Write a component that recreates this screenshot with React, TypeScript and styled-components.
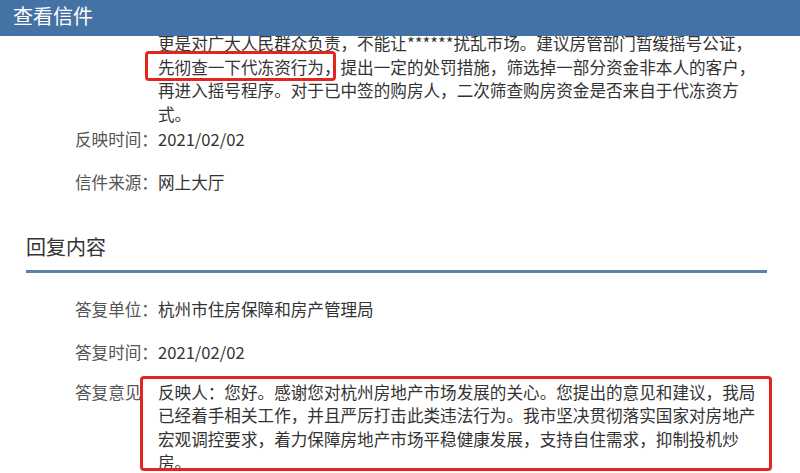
import React from "react";
import styled, { createGlobalStyle } from "styled-components";

const Global = createGlobalStyle`
  html, body { margin: 0; padding: 0; background: #fff; }
  body {
    font-family: "Noto Sans CJK SC", "Noto Sans", sans-serif;
    color: #333;
    overflow: hidden;
  }
`;

const Header = styled.header`
  position: fixed;
  top: 0;
  left: 0;
  right: 0;
  height: 36px;
  background: #4572a4;
  display: flex;
  align-items: center;
  padding-left: 13px;
  z-index: 2;
`;

const Title = styled.h1`
  margin: 0;
  font-size: 20px;
  font-weight: 400;
  color: #fff;
  line-height: 28px;
  margin-top: -4px;
`;

const Main = styled.main`
  padding: 32px 33px 0 26px;
`;

const FieldList = styled.div<{ $top?: number }>`
  display: flex;
  flex-direction: column;
  padding-left: 49px;
  margin-top: ${(p) => p.$top ?? 0}px;
`;

const Field = styled.div<{ $gap?: number }>`
  display: grid;
  grid-template-columns: 83px 600px;
  font-size: 16.6px;
  line-height: 23.5px;
  margin-top: ${(p) => p.$gap ?? 0}px;
`;

const Label = styled.div`
  color: #555;
  white-space: nowrap;
`;

const Value = styled.div<{ $boxed?: boolean }>`
  color: #333;
  position: relative;
  ${(p) =>
    p.$boxed
      ? `
    &::before {
      content: "";
      position: absolute;
      top: -5px;
      left: -18px;
      right: -14px;
      bottom: 4px;
      border: 3px solid #e2261f;
      border-radius: 4px;
      pointer-events: none;
    }
  `
      : ""}
`;

const Marked = styled.span`
  display: inline-block;
  position: relative;
  &::after {
    content: "";
    position: absolute;
    top: -5px;
    bottom: -1.5px;
    left: -13px;
    right: 5px;
    border: 3px solid #e2261f;
    border-radius: 4px;
    pointer-events: none;
  }
`;

const SectionTitle = styled.h2`
  margin: 38px 0 0;
  font-size: 20px;
  font-weight: 400;
  line-height: 28px;
  color: #333;
  padding-bottom: 9px;
  border-bottom: 3px solid #5d80a7;
`;

export default function App() {
  return (
    <>
      <Global />
      <Header>
        <Title>查看信件</Title>
      </Header>
      <Main>
        <FieldList>
          <Field>
            <Label></Label>
            <Value>
              更是对广大人民群众负责，不能让******扰乱市场。建议房管部门暂缓摇号公证，
              <Marked>先彻查一下代冻资行为，</Marked>
              提出一定的处罚措施，筛选掉一部分资金非本人的客户，再进入摇号程序。对于已中签的购房人，二次筛查购房资金是否来自于代冻资方式。
            </Value>
          </Field>
          <Field $gap={2}>
            <Label>反映时间：</Label>
            <Value>2021/02/02</Value>
          </Field>
          <Field $gap={19.5}>
            <Label>信件来源：</Label>
            <Value>网上大厅</Value>
          </Field>
        </FieldList>
        <SectionTitle>回复内容</SectionTitle>
        <FieldList $top={25}>
          <Field>
            <Label>答复单位：</Label>
            <Value>杭州市住房保障和房产管理局</Value>
          </Field>
          <Field $gap={19.5}>
            <Label>答复时间：</Label>
            <Value>2021/02/02</Value>
          </Field>
          <Field $gap={16.5}>
            <Label>答复意见</Label>
            <Value $boxed>
              反映人：您好。感谢您对杭州房地产市场发展的关心。您提出的意见和建议，我局已经着手相关工作，并且严厉打击此类违法行为。我市坚决贯彻落实国家对房地产宏观调控要求，着力保障房地产市场平稳健康发展，支持自住需求，抑制投机炒房。
            </Value>
          </Field>
        </FieldList>
      </Main>
    </>
  );
}
